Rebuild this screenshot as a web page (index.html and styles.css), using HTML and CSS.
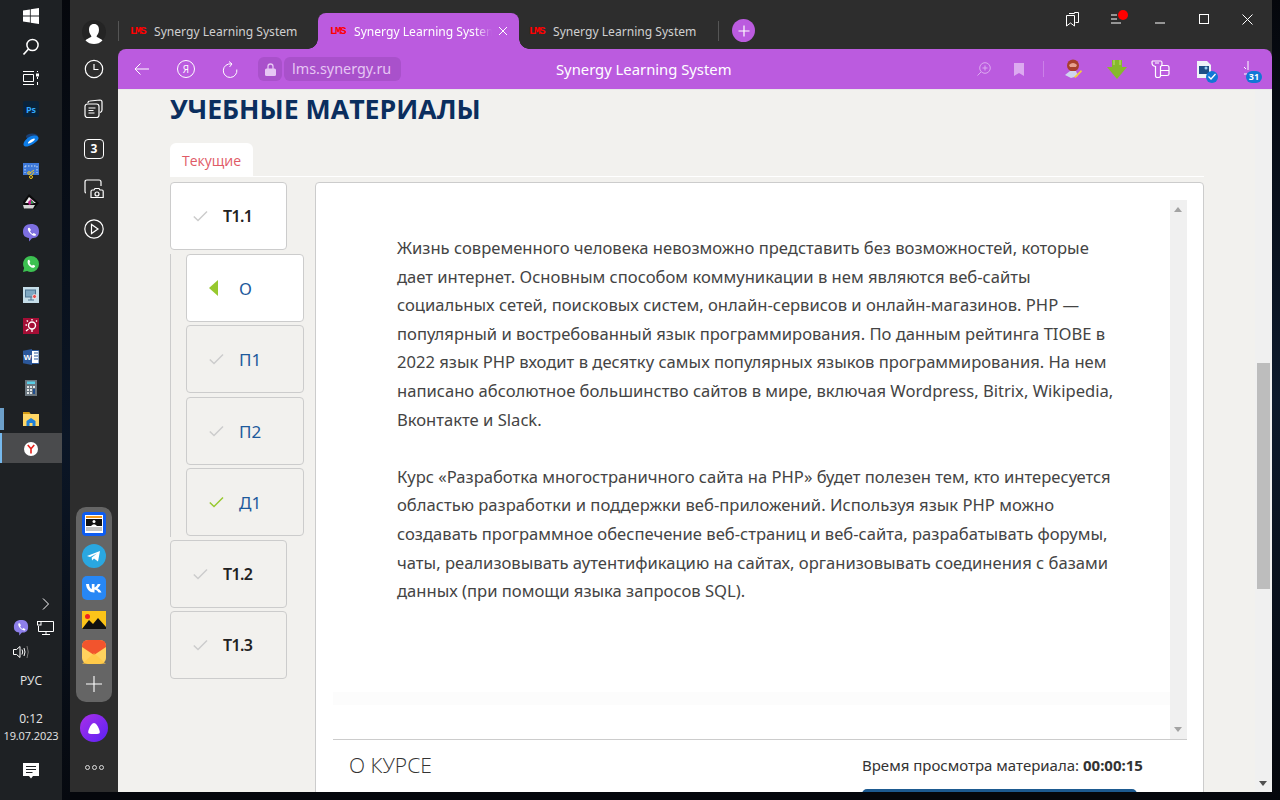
FILE: index.html
```html
<!DOCTYPE html>
<html lang="ru">
<head>
<meta charset="utf-8">
<title>Synergy Learning System</title>
<link rel="stylesheet" href="styles.css">
</head>
<body>
<div class="desktop">
  <aside class="taskbar">
    <div class="task-top">
      <div class="tb-icon"><svg width="16" height="16" viewBox="0 0 16 16"><path fill="#fff" d="M0 2.400 6.900 1.400V7.600H0ZM7.700 1.300 16 0V7.600H7.700ZM0 8.400H6.900V14.600L0 13.600ZM7.700 8.400H16V16L7.700 14.700Z"/></svg></div>
      <div class="tb-icon"><svg width="18" height="18" viewBox="0 0 18 18"><circle cx="10.500" cy="7" r="5.600" fill="none" stroke="#fff" stroke-width="1.500"/><path d="M6.500 11 1.500 16.500" stroke="#fff" stroke-width="1.700"/></svg></div>
      <div class="tb-icon"><svg width="16" height="16" viewBox="0 0 16 16" fill="none" stroke="#fff" stroke-width="1"><path d="M0 1.500H11M0 14.500H11M.5 4.500H10.500V11.500H.5Z"/><path d="M14.500 1V2M14.500 7V9M14.500 12V15"/><rect x="13" y="3.500" width="3" height="3" fill="#fff" stroke="none"/></svg></div>
      <div class="tb-icon"><svg width="16" height="16" viewBox="0 0 16 16"><rect width="16" height="16" rx="2" fill="#0a2238"/><text x="8" y="11.500" class="ps-text">Ps</text></svg></div>
      <div class="tb-icon"><svg width="16" height="16" viewBox="0 0 16 16"><ellipse cx="9" cy="4.500" rx="6" ry="3" fill="#1b3f72"/><path d="M.5 12C1 8 7 3 12 3.500c4 .5 4.500 3 2 5.500-3 3-8.500 6-11.500 5.500-1.500-.3-2-1.200-2-2Z" fill="#0d7de8"/><path d="M5 10.500C6.500 8.500 9 6.800 11 6.500c1.500 0 1 1.300-.5 2.500C8.500 10.500 6 12 5 11.500Z" fill="#fff"/></svg></div>
      <div class="tb-icon"><svg width="16" height="16" viewBox="0 0 16 16"><rect width="16" height="12" fill="#3d78d8"/><path d="M2 3H14M2 3V10M14 3V10" stroke="#cfe0f7" stroke-dasharray="1.500 1.500" fill="none"/><circle cx="6" cy="10" r="1.300" fill="none" stroke="#f5c518"/><circle cx="8" cy="14" r="1.500" fill="none" stroke="#f5c518"/><path d="M7 10 11 7M8.500 12.500 11 9" stroke="#f5c518"/></svg></div>
      <div class="tb-icon"><svg width="16" height="16" viewBox="0 0 16 16"><path d="M0 8 6 0 16 9 11 15H2Z" fill="#0b0b0b"/><path d="M2 9 6 3 13 9Z" fill="#eee"/><path d="M5 8 8 5 11 9 6 11Z" fill="#c0228e"/><path d="M8 6 11 9 8 10Z" fill="#26a048"/><path d="M0 11H12L10 14.500H1Z" fill="#d5d5d5"/></svg></div>
      <div class="tb-icon"><svg width="16" height="18" viewBox="0 0 16 18"><path d="M8 0C13 0 16 2 16 7.500S13 14 9 14.200L6 17.500V14C2 13.200 0 12 0 7.500S3 0 8 0Z" fill="#7d6fe0"/><path d="M5 4 6.500 3.700 8 6 7 7.300C7.500 8.500 8.500 9.500 9.500 10L10.700 9 13 10.300 12.500 11.800C10 12.500 4 8 5 4Z" fill="#fff"/></svg></div>
      <div class="tb-icon"><svg width="16" height="16" viewBox="0 0 16 16"><path d="M8 0a8 8 0 0 1 0 16c-1.400 0-2.700-.4-3.900-1L0 16l1.100-4A8 8 0 0 1 8 0Z" fill="#3cc051"/><path d="M5 4 6.300 3.800 7.300 6 6.400 7.100C7 8.300 7.900 9.100 9 9.700L10 8.700 12.200 9.800C12 11.500 10.800 12 9.500 11.800 6.800 11.200 3.400 7.600 5 4Z" fill="#fff"/></svg></div>
      <div class="tb-icon"><svg width="16" height="16" viewBox="0 0 16 16"><rect width="16" height="16" fill="#c5dde8"/><rect x="2.500" y="3" width="10" height="7" fill="#7fa8c2" stroke="#4d7390"/><path d="M5 13H11M8 10V13" stroke="#4d7390"/><circle cx="11.500" cy="9.500" r="2" fill="#e55050" stroke="#fff" stroke-width=".7"/></svg></div>
      <div class="tb-icon"><svg width="16" height="16" viewBox="0 0 16 16"><rect width="16" height="16" fill="#a40e35"/><circle cx="9" cy="7.500" r="3.500" fill="none" stroke="#fff" stroke-width="1.400"/><path d="M9 2.500V1M4 7H2.500M5 3.500 3.700 2.500M5.500 11 3 13M13 3.500 14 2.500M9 11V14" stroke="#fff" stroke-width="1.300"/></svg></div>
      <div class="tb-icon"><svg width="16" height="16" viewBox="0 0 16 16"><rect x="6" y="1.500" width="10" height="13" fill="#fff" stroke="#2b579a"/><path d="M11 4H15M11 7H15M11 10H15" stroke="#2b579a"/><path d="M0 1.800 9 0V16L0 14.200Z" fill="#2b579a"/><text x="4.500" y="10.800" class="w-text">W</text></svg></div>
      <div class="tb-icon"><svg width="12" height="16" viewBox="0 0 12 16"><rect width="12" height="16" fill="#6b7780"/><rect x="2" y="1.500" width="8" height="2.500" fill="#58cfe8"/><path d="M2 6H4V8H2ZM5 6H7V8H5ZM8 6H10V8H8ZM2 9H4V11H2ZM5 9H7V11H5ZM2 12H4V14H2ZM5 12H7V14H5Z" fill="#e0e4e6"/><rect x="8" y="9" width="2" height="5" fill="#1f4e8f"/></svg></div>
      <div class="tb-icon tb-mark"><svg width="16" height="14" viewBox="0 0 16 14"><path d="M0 0H6L7.500 2H16V14H0Z" fill="#ffd766"/><path d="M0 0H6L7.500 2H0Z" fill="#d39a13"/><path d="M3.500 9 8 6 12.500 9V14H9.500V11H6.500V14H3.500Z" fill="#1f80d8"/></svg></div>
      <div class="tb-icon tb-active"><svg width="14" height="14" viewBox="0 0 16 16"><circle cx="8" cy="8" r="8" fill="#fff"/><path d="M4.300 3.500 8 7.800 11.700 3.500M8 7.500V13" fill="none" stroke="#e52620" stroke-width="1.900"/></svg></div>
    </div>
    <div class="tray">
      <svg class="tray-arrow" width="8" height="12" viewBox="0 0 8 12"><path d="M1 .5 6.500 6 1 11.500" fill="none" stroke="#fff"/></svg>
      <div class="tray-row">
        <svg width="16" height="16" viewBox="0 0 16 18"><path d="M8 0C13 0 16 2 16 7.500S13 14 9 14.200L6 17.500V14C2 13.200 0 12 0 7.500S3 0 8 0Z" fill="#8d7fea"/><path d="M5 4 6.500 3.700 8 6 7 7.300C7.500 8.500 8.500 9.500 9.500 10L10.700 9 13 10.300 12.500 11.800C10 12.500 4 8 5 4Z" fill="#fff"/></svg>
        <svg width="17" height="14" viewBox="0 0 17 14" fill="none" stroke="#fff"><path d="M4 .5H16.500V10.500H1.500V5M9 10.500V13M5 13.500H13"/><rect x=".5" y=".5" width="3.500" height="3.500"/></svg>
      </div>
      <div class="tray-vol"><svg width="17" height="14" viewBox="0 0 17 14" fill="none" stroke="#fff"><path d="M.5 4.500H3.500L7 1.500V12.500L3.500 9.500H.5Z"/><path d="M9 4.500Q10.500 7 9 9.500M11 3Q13 7 11 11"/><path d="M14 1Q16.500 7 14 13" stroke="#777"/></svg></div>
      <div class="tray-text tray-lang">РУС</div>
      <div class="tray-text tray-time">0:12</div>
      <div class="tray-text tray-date">19.07.2023</div>
      <svg class="tray-msg" width="16" height="16" viewBox="0 0 16 16"><path d="M0 0H16V13H10L8 15.500 6 13H0Z" fill="#fff"/><path d="M3 3.500H13M3 6.500H13M3 9.500H9.500" stroke="#1e2124" stroke-width="1.100"/></svg>
    </div>
  </aside>
  <div class="wall"></div>
  <div class="browser">
    <nav class="sidepanel">
      <div class="side-top">
        <div class="avatar"><svg width="18" height="20" viewBox="0 0 18 20"><path d="M9 0C12.500 0 14 2.500 14 6S12 11 11.500 12.500C12.500 14 18 15 18 18Q18 20 16 20H2Q0 20 0 18C0 15 5.500 14 6.500 12.500 6 11 4 9.500 4 6S5.500 0 9 0Z" fill="#fff"/></svg></div>
        <svg class="side-ic" width="20" height="20" viewBox="0 0 20 20" fill="none" stroke="#fff" stroke-width="1.200"><circle cx="10" cy="10" r="8.700"/><path d="M10 5V10.500H14.500"/></svg>
        <svg class="side-ic" width="20" height="20" viewBox="0 0 20 20" fill="none" stroke="#fff" stroke-width="1.200"><rect x="1" y="5" width="14" height="13.500" rx="2.500"/><path d="M4 4V3.500Q4 2 6 2L16 1Q18 1 18 3V11Q18 13 16 13.500M4.500 9H11.500M4.500 11.500H9.500M4.500 14H10.500"/></svg>
        <div class="side-num">3</div>
        <svg class="side-ic" width="20" height="20" viewBox="0 0 20 20" fill="none" stroke="#fff" stroke-width="1.200"><path d="M2 14Q1 14 1 12V3Q1 1 3 1H15Q17 1 17 3V7M7 18.500V12.500Q7 11 8.500 11H10L11 9.500H15L16 11H18Q19.200 11 19.200 12.500V18.500Z"/><circle cx="13" cy="15" r="2"/></svg>
        <svg class="side-ic" width="20" height="20" viewBox="0 0 20 20" fill="none" stroke="#fff" stroke-width="1.200"><circle cx="10" cy="10" r="9.200"/><path d="M7.500 5.500V14.500L14 10Z"/></svg>
      </div>
      <div class="dock">
        <div class="dock-ic"><svg width="24" height="24" viewBox="0 0 24 24"><rect width="24" height="24" rx="4" fill="#0d5cf2"/><rect x="3" y="3" width="18" height="18" fill="#fff"/><rect x="4" y="4" width="16" height="2" fill="#f59a1c"/><rect x="4" y="7" width="16" height="7" fill="#111"/><circle cx="12" cy="9.500" r="1.500" fill="#fff"/><path d="M9 14Q12 10.500 15 14Z" fill="#fff"/><path d="M4 16H20M4 18H20" stroke="#888"/></svg></div>
        <div class="dock-ic"><svg width="24" height="24" viewBox="0 0 24 24"><circle cx="12" cy="12" r="12" fill="#2aa7e0"/><path d="M5 12 18 7 16 17.500 12 14.500 10 16.500 9.700 13.500 15 9.500 8 13Z" fill="#fff"/></svg></div>
        <div class="dock-ic"><svg width="24" height="24" viewBox="0 0 24 24"><rect width="24" height="24" rx="5" fill="#2787f5"/><path d="M4 8H7C7.200 11 8.500 12.500 9.800 13V8H12.500V11.500C13.800 11.300 15 9.800 15.700 8H18.500C18 10 16.700 11.500 15.500 12.300 16.800 13 18.500 14.400 19.500 16.500H16.500C15.800 15 14.300 13.800 12.500 13.500V16.500H12C7.500 16.500 4.500 13.500 4 8Z" fill="#fff"/></svg></div>
        <div class="dock-ic"><svg width="24" height="18" viewBox="0 0 24 18"><rect width="24" height="18" fill="#fcc419"/><circle cx="5.500" cy="5.500" r="2.500" fill="#e22"/><path d="M0 18 7 9 11 13 16 7 24 16V18Z" fill="#111"/></svg></div>
        <div class="dock-ic"><svg width="24" height="24" viewBox="0 0 24 24"><rect width="24" height="24" rx="6" fill="#ffd25e"/><path d="M0 6Q0 0 6 0H18Q24 0 24 6V7L12 15 0 7Z" fill="#f2542d"/><path d="M0 24 12 13 24 24Z" fill="#ffc53d" opacity=".6"/></svg></div>
        <div class="dock-ic"><svg width="16" height="16" viewBox="0 0 16 16"><path d="M8 0V16M0 8H16" stroke="#fff" stroke-width="1.100"/></svg></div>
      </div>
      <div class="alice"><svg width="12" height="11" viewBox="0 0 12 11"><path d="M6 0C8 0 9.500 2.500 11 6S12 11 9 11H3C0 11-.5 9.500 1 6S4 0 6 0Z" fill="#fff"/></svg></div>
      <div class="side-more"><span></span><span></span><span></span></div>
    </nav>
    <div class="main">
      <header class="tabstrip">
        <div class="tabs">
          <div class="tab tab-first"><span class="lms">LMS</span><span class="tab-title">Synergy Learning System</span></div>
          <div class="tab tab-active"><span class="lms">LMS</span><span class="tab-title">Synergy Learning System</span><svg class="tab-close" width="10" height="10" viewBox="0 0 10 10"><path d="M1 1 9 9M9 1 1 9" stroke="#fff"/></svg></div>
          <div class="tab tab-last"><span class="lms">LMS</span><span class="tab-title">Synergy Learning System</span></div>
          <div class="new-tab"><svg width="12" height="12" viewBox="0 0 12 12"><path d="M6 .5V11.500M.5 6H11.500" stroke="#fff" stroke-width="1.200"/></svg></div>
        </div>
        <div class="win-controls">
          <svg class="wc wc-books" width="13" height="15" viewBox="0 0 13 15" fill="none" stroke="#fff"><path d="M3 1.500H8.500V.5H12.500V10.500H9.500M.5 3.500H8.500V14L4.500 11 .5 14Z"/></svg>
          <div class="wc menu-dot"><svg width="14" height="10" viewBox="0 0 14 10" fill="none" stroke="#fff"><path d="M0 1H6M0 5H6M0 9H10"/></svg><i></i></div>
          <svg class="wc wc-min" width="10" height="2" viewBox="0 0 10 2"><path d="M0 1H10" stroke="#fff"/></svg>
          <svg class="wc wc-max" width="10" height="10" viewBox="0 0 10 10"><rect x=".5" y=".5" width="9" height="9" fill="none" stroke="#fff"/></svg>
          <svg class="wc wc-close" width="11" height="11" viewBox="0 0 11 11"><path d="M.5 .5 10.500 10.500M10.500 .5 .5 10.500" stroke="#fff"/></svg>
        </div>
      </header>
      <div class="toolbar">
        <div class="nav-left">
          <svg width="15" height="12" viewBox="0 0 15 12" fill="none" stroke="#fff"><path d="M15 6H1M6.500 .5 1 6 6.500 11.500"/></svg>
          <div class="ya-circle">Я</div>
          <svg width="16" height="17" viewBox="0 0 16 17" fill="none" stroke="#fff"><path d="M9.500 3A6.800 6.800 0 1 0 14.800 8.500M7 .5 10 3 7.500 6"/></svg>
          <div class="omni">
            <span class="lock"><svg width="11" height="13" viewBox="0 0 11 13"><path d="M3 6V3.500a2.500 2.500 0 0 1 5 0V6" fill="none" stroke="#e6c6f4" stroke-width="1.300"/><rect y="5.500" width="11" height="7.500" rx="1.500" fill="#e6c6f4"/></svg></span>
            <span class="url">lms.synergy.ru</span>
          </div>
        </div>
        <div class="page-title">Synergy Learning System</div>
        <div class="tools">
          <svg width="14" height="14" viewBox="0 0 14 14" fill="none" stroke="#dcaaf0"><circle cx="8" cy="6" r="5.300"/><path d="M4 10 .5 13.500M8 3.500V8.500M5.500 6H10.500"/></svg>
          <svg class="bm" width="10" height="13" viewBox="0 0 10 13"><path d="M0 0H10V13L5 10 0 13Z" fill="#dcaaf0"/></svg>
          <span class="tool-sep"></span>
          <svg class="ext1" width="20" height="20" viewBox="0 0 20 20"><circle cx="10" cy="6.500" r="6" fill="#a8402c"/><path d="M6 6Q10 2 14 6L13 8H7Z" fill="#e7a08f"/><path d="M2 16 7 12H13L15 17 8 19Z" fill="#cfd6ef"/><path d="M11 18 18 11 19 12.500 12.500 19Z" fill="#f3cf3c"/></svg>
          <svg class="ext2" width="20" height="19" viewBox="0 0 20 19"><path d="M5 0H15V7H20L10 19 0 7H5Z" fill="#86b92c"/><path d="M7 0V5M13 0V5" stroke="#c0dd78"/></svg>
          <svg class="ext3" width="19" height="18" viewBox="0 0 19 18" fill="none" stroke="#fff" stroke-width="1.200"><path d="M1.500 1H10Q11 1 11 3V4Q11 6 9.500 6.500V16Q9.500 17.500 7 17.500 4.500 17.500 4.500 16V6.500Q1 6 1 3 1 1 1.500 1ZM4 3H8"/><path d="M11 5.500H16Q18 5.500 18 7.500V14Q18 15.500 16 15.500H10M10 10.500H18"/></svg>
          <div class="ext4"><svg width="14" height="17" viewBox="0 0 14 17"><path d="M0 0H10L14 4V17H0Z" fill="#eef3f7"/><rect x="2" y="5" width="10" height="8" fill="#1d4f86"/><circle cx="9" cy="7" r="1.500" fill="#9cd1f2"/></svg><span class="ext4-badge"><svg width="8" height="7" viewBox="0 0 8 7"><path d="M.5 3.500 3 6 7.500 1" fill="none" stroke="#fff" stroke-width="1.300"/></svg></span></div>
          <div class="ext5"><svg width="16" height="16" viewBox="0 0 16 16"><path d="M4 0V9M0 6 2 8M0 13H3" stroke="#fff" stroke-width="1"/></svg><span class="ext5-badge">31</span></div>
        </div>
      </div>
      <div class="viewport">
        <main class="page">
          <h1 class="page-h1">УЧЕБНЫЕ МАТЕРИАЛЫ</h1>
          <div class="tabs-row"><div class="page-tab">Текущие</div></div>
          <div class="course">
            <div class="tree">
              <div class="node node-top node-on"><svg class="chk" width="15" height="12" viewBox="0 0 15 12"><path d="M.8 6.500 5 10.500 14 1.500" fill="none" stroke="#ccc" stroke-width="1.500"/></svg><span>Т1.1</span></div>
              <div class="sub">
                <div class="node node-sub node-on"><span class="tri"></span><span>О</span></div>
                <div class="node node-sub"><svg class="chk" width="15" height="12" viewBox="0 0 15 12"><path d="M.8 6.500 5 10.500 14 1.500" fill="none" stroke="#ccc" stroke-width="1.500"/></svg><span>П1</span></div>
                <div class="node node-sub"><svg class="chk" width="15" height="12" viewBox="0 0 15 12"><path d="M.8 6.500 5 10.500 14 1.500" fill="none" stroke="#ccc" stroke-width="1.500"/></svg><span>П2</span></div>
                <div class="node node-sub"><svg class="chk" width="15" height="12" viewBox="0 0 15 12"><path d="M.8 6.500 5 10.500 14 1.500" fill="none" stroke="#97c92e" stroke-width="1.500"/></svg><span>Д1</span></div>
              </div>
              <div class="node node-top"><svg class="chk" width="15" height="12" viewBox="0 0 15 12"><path d="M.8 6.500 5 10.500 14 1.500" fill="none" stroke="#ccc" stroke-width="1.500"/></svg><span>Т1.2</span></div>
              <div class="node node-top"><svg class="chk" width="15" height="12" viewBox="0 0 15 12"><path d="M.8 6.500 5 10.500 14 1.500" fill="none" stroke="#ccc" stroke-width="1.500"/></svg><span>Т1.3</span></div>
            </div>
            <section class="panel">
              <div class="reader">
                <div class="reader-text">
                  <p>Жизнь современного человека невозможно представить без возможностей, которые<br>дает интернет. Основным способом коммуникации в нем являются веб-сайты<br>социальных сетей, поисковых систем, онлайн-сервисов и онлайн-магазинов. PHP —<br>популярный и востребованный язык программирования. По данным рейтинга TIOBE в<br>2022 язык PHP входит в десятку самых популярных языков программирования. На нем<br>написано абсолютное большинство сайтов в мире, включая Wordpress, Bitrix, Wikipedia,<br>Вконтакте и Slack.</p>
                  <p>Курс «Разработка многостраничного сайта на PHP» будет полезен тем, кто интересуется<br>областью разработки и поддержки веб-приложений. Используя язык PHP можно<br>создавать программное обеспечение веб-страниц и веб-сайта, разрабатывать форумы,<br>чаты, реализовывать аутентификацию на сайтах, организовывать соединения с базами<br>данных (при помощи языка запросов SQL).</p>
                </div>
                <div class="reader-scroll"><span class="arr-up"></span><span class="arr-down"></span></div>
              </div>
              <div class="panel-foot">
                <div class="foot-title">О КУРСЕ</div>
                <div class="foot-right">
                  <div class="foot-time">Время просмотра материала: <b>00:00:15</b></div>
                  <div class="foot-btn"></div>
                </div>
              </div>
            </section>
          </div>
        </main>
        <div class="page-scroll"><span class="thumb"></span><span class="arr-down2"></span></div>
      </div>
    </div>
  </div>
  <div class="wall-right"></div>
</div>
</body>
</html>
```
FILE: styles.css
```css
* { box-sizing: border-box; }
html, body { margin: 0; height: 100%; overflow: hidden; background: #05070c; }
body { font-family: "Open Sans", "Noto Sans", sans-serif; }
.desktop { display: flex; width: 1280px; height: 800px; }
.taskbar { width: 62px; height: 800px; background: #1e2124; display: flex; flex-direction: column; justify-content: space-between; flex: none; }
.task-top { display: flex; flex-direction: column; align-items: center; }
.tb-icon { height: 31px; width: 62px; display: flex; align-items: center; justify-content: center; position: relative; flex: none; }
.tb-mark::before { content: ""; position: absolute; left: 0; top: 5px; width: 4px; height: 22px; background: #6c9fc9; }
.tb-active { height: 30px; padding-top: 2px; background: #4a4b4d; margin-top: -1px; }
.tb-active::before { content: ""; position: absolute; left: 0; top: 0; width: 2px; height: 30px; background: #76b9ed; }
.ps-text { font: bold 9px "Open Sans", sans-serif; fill: #31a8ff; text-anchor: middle; }
.w-text { font: bold 8px "Liberation Sans", sans-serif; fill: #fff; text-anchor: middle; }
.tray { display: flex; flex-direction: column; align-items: center; padding-bottom: 21px; }
.tray-arrow { margin-left: 30px; margin-bottom: 10px; }
.tray-row { display: flex; gap: 8px; align-items: center; margin-left: 5px; }
.tray-vol { height: 14px; width: 100%; margin-top: 9px; padding-left: 13px; }
.tray-vol svg { display: block; }
.tray-text { color: #e6e6e6; font-size: 12px; line-height: 16px; font-family: "Open Sans", sans-serif; }
.tray-lang { margin-top: 14px; }
.tray-time { margin-top: 22px; }
.tray-date { margin-top: 1px; font-size: 11px; letter-spacing: -.1px; white-space: nowrap; }
.tray-msg { margin-top: 19px; }
.wall { width: 8px; height: 800px; flex: none; background: linear-gradient(#05070c, #0b1626 55%, #06090f); }
.wall-right { width: 8px; height: 800px; flex: none; background: linear-gradient(#05070c, #0d1a2c 50%, #05070c); }
.browser { width: 1202px; height: 792px; display: flex; background: #2d2d2d; flex: none; }
.sidepanel { width: 48px; flex: none; display: flex; flex-direction: column; align-items: center; height: 100%; }
.side-top { display: flex; flex-direction: column; align-items: center; gap: 20px; padding-top: 20px; height: 507px; flex: none; }
.avatar { width: 24px; height: 24px; border-radius: 50%; background: #242424; display: flex; align-items: flex-end; justify-content: center; overflow: hidden; margin-bottom: -5px; flex: none; }
.side-ic { flex: none; display: block; }
.side-num { width: 20px; height: 20px; border: 1.200px solid #fff; border-radius: 4px; color: #fff; font-size: 12px; font-weight: 700; line-height: 17px; text-align: center; flex: none; }
.dock { width: 36px; height: 195px; background: #656565; border-radius: 10px; display: flex; flex-direction: column; align-items: center; padding-top: 5px; gap: 8px; flex: none; }
.dock-ic { width: 24px; height: 24px; display: flex; align-items: center; justify-content: center; flex: none; }
.alice { width: 28px; height: 28px; border-radius: 50%; margin-top: 12px; background: linear-gradient(135deg, #a92fe8, #5b22f5); display: flex; align-items: center; justify-content: center; flex: none; }
.side-more { display: flex; gap: 2px; margin-top: 23px; }
.side-more span { width: 5px; height: 5px; border: 1px solid #ddd; border-radius: 50%; }
.main { width: 1154px; display: flex; flex-direction: column; }
.tabstrip { height: 49px; display: flex; justify-content: space-between; flex: none; }
.tabs { display: flex; align-items: flex-start; padding-top: 13px; }
.tab { height: 36px; display: flex; align-items: center; font-family: "Noto Sans", "Open Sans", sans-serif; font-size: 12.100px; color: #d0d0d0; position: relative; flex: none; white-space: nowrap; }
.tab-first { width: 200px; padding-left: 12px; }
.tab-first::before { content: ""; position: absolute; left: 0; top: 8px; width: 1px; height: 20px; background: #555; }
.tab-active { width: 201px; padding-left: 12px; background: #bb5bdf; color: #fff; border-radius: 8px 8px 0 0; }
.tab-active::before, .tab-active::after { content: ""; position: absolute; bottom: 0; width: 10px; height: 10px; }
.tab-active::before { left: -10px; background: radial-gradient(circle at 0 0, #2d2d2d 9.500px, #bb5bdf 10px); }
.tab-active::after { right: -10px; background: radial-gradient(circle at 100% 0, #2d2d2d 9.500px, #bb5bdf 10px); }
.tab-last { width: 200px; padding-left: 10px; }
.tab-last::after { content: ""; position: absolute; right: 0; top: 8px; width: 1px; height: 20px; background: #555; }
.lms { color: #f00; font: 700 11px "Liberation Mono", monospace; width: 15px; letter-spacing: -1.600px; margin-right: 9px; flex: none; }
.tab-title { overflow: hidden; position: relative; z-index: 1; }
.tab-active .tab-title { width: 138px; flex: none; -webkit-mask-image: linear-gradient(90deg, #000 88%, transparent); mask-image: linear-gradient(90deg, #000 88%, transparent); }
.tab-close { margin-left: 6px; flex: none; }
.new-tab { width: 23px; height: 23px; border-radius: 50%; background: #bb5bdf; margin: 6px 0 0 13px; display: flex; align-items: center; justify-content: center; }
.win-controls { display: flex; align-items: flex-start; justify-content: flex-end; }
.wc { flex: none; display: block; }
.wc-books { margin: 12px 32px 0 0; }
.menu-dot { margin: 14px 26px 0 0; position: relative; width: 18px; height: 12px; }
.wc-min { margin: 22px 34px 0 0; }
.wc-max { margin: 14px 33px 0 0; }
.wc-close { margin: 14px 19px 0 0; }
.menu-dot svg { display: block; }
.menu-dot i { position: absolute; left: 7px; top: -4px; width: 10px; height: 10px; border-radius: 50%; background: #f00; }
.toolbar { height: 40px; flex: none; background: #bb5bdf; border-radius: 8px 8px 0 0; position: relative; display: flex; align-items: center; justify-content: space-between; padding-left: 16px; padding-right: 10px; }
.nav-left { display: flex; align-items: center; }
.ya-circle { width: 18px; height: 18px; border: 1px solid #fff; border-radius: 50%; color: #fff; font-size: 10px; line-height: 16px; text-align: center; margin: 0 27px 0 28px; }
.omni { display: flex; gap: 2px; margin-left: 20px; height: 24px; }
.lock { width: 24px; height: 24px; background: #a951cb; border-radius: 6px; display: flex; align-items: center; justify-content: center; }
.url { background: #a951cb; border-radius: 6px; color: #e6c6f4; font-size: 14.400px; line-height: 24px; width: 117px; padding-left: 8px; white-space: nowrap; font-family: "Noto Sans", sans-serif; }
.page-title { position: absolute; left: 438px; top: 10px; color: #fff; font-family: "Noto Sans", sans-serif; font-size: 14.800px; line-height: 20px; }
.tools { display: flex; align-items: center; }
.bm { margin-left: 23px; }
.tool-sep { width: 1px; height: 16px; background: #cb80e8; margin: 0 19px; }
.ext1 { margin-right: 24px; }
.ext2 { margin-right: 24px; }
.ext3 { margin-right: 27px; }
.ext4 { position: relative; width: 14px; height: 17px; margin-right: 33px; }
.ext4 svg { display: block; }
.ext4-badge { position: absolute; left: 9px; top: 10px; width: 12px; height: 12px; border-radius: 50%; background: #1277d6; display: flex; align-items: center; justify-content: center; }
.ext5 { position: relative; width: 18px; height: 16px; }
.ext5 > svg { display: block; }
.ext5-badge { position: absolute; left: 2px; top: 10px; width: 16px; height: 12px; border-radius: 6px; background: #1277d6; color: #fff; font-size: 9px; font-weight: 700; line-height: 12px; text-align: center; }
.viewport { flex: 1; background: #f2f1ee; display: flex; min-height: 0; border-top: 1px solid #e8e8e8; }
.page { width: 1137px; padding-left: 52px; overflow: hidden; }
.page-h1 { margin: 0; padding-top: 2px; font-size: 26.700px; line-height: 34px; font-weight: 700; color: #0b2e5e; height: 53px; white-space: nowrap; }
.tabs-row { height: 34px; border-bottom: 1px solid #fff; width: 1034px; }
.page-tab { width: 83px; height: 33px; background: #fff; border-radius: 6px 6px 0 0; color: #e05a66; font-size: 14px; line-height: 35px; text-align: center; }
.course { display: flex; gap: 11px; padding-top: 5px; align-items: flex-start; }
.tree { width: 134px; flex: none; display: flex; flex-direction: column; gap: 3px; }
.node { height: 68px; border: 1px solid #ccc; border-radius: 4px; display: flex; align-items: center; flex: none; }
.node-top { width: 117px; padding-left: 22px; gap: 15px; font-weight: 600; color: #222; font-family: "Noto Sans", sans-serif; font-size: 16px; letter-spacing: -.6px; }
.node-sub { width: 118px; padding-left: 22px; gap: 15px; color: #1e5a9c; font-family: "Noto Sans", sans-serif; font-size: 17px; }
.node-sub:nth-child(3) { margin-top: 1px; }
.node-on { background: #fff; }
.sub { padding-left: 15px; border-left: 1px solid #ccc; display: flex; flex-direction: column; gap: 3px; margin-top: 1px; height: 283px; flex: none; }
.chk { flex: none; }
.tri { width: 0; height: 0; border-style: solid; border-width: 8px 9px 8px 0; border-color: transparent #97c92e transparent transparent; margin-right: 6px; }
.panel { width: 889px; height: 640px; background: #fff; border: 1px solid #ccc; border-radius: 4px 4px 0 0; padding: 17px 16px 0 17px; flex: none; }
.reader { height: 540px; display: flex; border-bottom: 1px solid #ccc; background: linear-gradient(#fff 492px, #fcfcfc 492px, #fcfcfc 505px, #fff 505px); }
.reader-text { width: 837px; flex: none; padding: 34px 0 0 64px; color: #444; font-family: "Noto Sans", "Open Sans", sans-serif; font-size: 16.600px; line-height: 28.600px; white-space: nowrap; }
.reader-text p { margin: 0 0 28.600px; }
.reader-scroll { width: 17px; flex: none; background: #f0f0f0; position: relative; }
.arr-up, .arr-down, .arr-down2 { position: absolute; left: 4px; width: 0; height: 0; border-left: 4px solid transparent; border-right: 4px solid transparent; }
.arr-up { top: 7px; border-bottom: 5px solid #a3a3a3; }
.arr-down { bottom: 7px; border-top: 5px solid #a3a3a3; }
.panel-foot { display: flex; justify-content: space-between; padding: 11px 18px 0 16px; }
.foot-title { font-family: "Open Sans", sans-serif; font-weight: 300; font-size: 21px; line-height: 28px; color: #333; }
.foot-right { width: 307px; }
.foot-time { font-size: 15px; line-height: 28px; color: #333; font-family: "Noto Sans", sans-serif; white-space: nowrap; }
.foot-time b { font-weight: 700; }
.foot-btn { margin: 10px 0 0; height: 30px; width: 275px; background: #1d5a90; border-radius: 5px 5px 0 0; }
.page-scroll { width: 17px; background: #f0f0f0; position: relative; }
.thumb { position: absolute; left: 2px; top: 273px; width: 13px; height: 226px; background: #bdbdbd; }
.arr-down2 { left: 4px; bottom: 6px; border-top: 5px solid #505050; }
```
